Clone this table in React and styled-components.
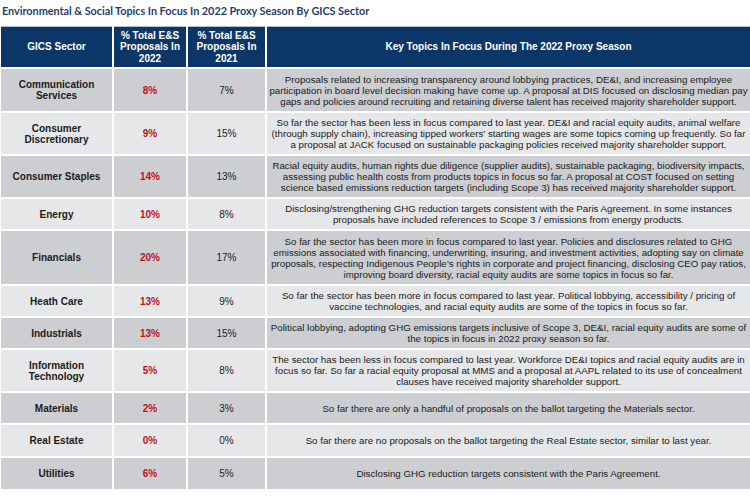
import React from "react";
import styled, { createGlobalStyle } from "styled-components";

const GlobalStyle = createGlobalStyle`
  body {
    margin: 0;
    background: #ffffff;
    font-family: "Liberation Sans", Arial, sans-serif;
  }
`;

const ROWS = [
  {
    sector: "Communication Services",
    y22: "8%",
    y21: "7%",
    h: 42,
    text: "Proposals related to increasing transparency around lobbying practices, DE&I, and increasing employee participation in board level decision making have come up. A proposal at DIS focused on disclosing median pay gaps and policies around recruiting and retaining diverse talent has received majority shareholder support.",
  },
  {
    sector: "Consumer Discretionary",
    y22: "9%",
    y21: "15%",
    h: 41,
    text: "So far the sector has been less in focus compared to last year. DE&I and racial equity audits, animal welfare (through supply chain), increasing tipped workers' starting wages are some topics coming up frequently. So far a proposal at JACK focused on sustainable packaging policies received majority shareholder support.",
  },
  {
    sector: "Consumer Staples",
    y22: "14%",
    y21: "13%",
    h: 41,
    text: "Racial equity audits, human rights due diligence (supplier audits), sustainable packaging, biodiversity impacts, assessing public health costs from products topics in focus so far. A proposal at COST focused on setting science based emissions reduction targets (including Scope 3) has received majority shareholder support.",
  },
  {
    sector: "Energy",
    y22: "10%",
    y21: "8%",
    h: 30,
    text: "Disclosing/strengthening GHG reduction targets consistent with the Paris Agreement. In some instances proposals have included references to Scope 3 / emissions from energy products.",
  },
  {
    sector: "Financials",
    y22: "20%",
    y21: "17%",
    h: 53,
    text: "So far the sector has been more in focus compared to last year. Policies and disclosures related to GHG emissions associated with financing, underwriting, insuring, and investment activities, adopting say on climate proposals, respecting Indigenous People\u2019s rights in corporate and project financing, disclosing CEO pay ratios, improving board diversity, racial equity audits are some topics in focus so far.",
  },
  {
    sector: "Heath Care",
    y22: "13%",
    y21: "9%",
    h: 30,
    text: "So far the sector has been more in focus compared to last year. Political lobbying, accessibility / pricing of vaccine technologies, and racial equity audits are some of the topics in focus so far.",
  },
  {
    sector: "Industrials",
    y22: "13%",
    y21: "15%",
    h: 30,
    text: "Political lobbying, adopting GHG emissions targets inclusive of Scope 3, DE&I, racial equity audits are some of the topics in focus in 2022 proxy season so far.",
  },
  {
    sector: "Information Technology",
    y22: "5%",
    y21: "8%",
    h: 41,
    text: "The sector has been less in focus compared to last year. Workforce DE&I topics and racial equity audits are in focus so far. So far a racial equity proposal at MMS and a proposal at AAPL related to its use of concealment clauses have received majority shareholder support.",
  },
  {
    sector: "Materials",
    y22: "2%",
    y21: "3%",
    h: 30,
    text: "So far there are only a handful of proposals on the ballot targeting the Materials sector.",
  },
  {
    sector: "Real Estate",
    y22: "0%",
    y21: "0%",
    h: 31,
    text: "So far there are no proposals on the ballot targeting the Real Estate sector, similar to last year.",
  },
  {
    sector: "Utilities",
    y22: "6%",
    y21: "5%",
    h: 31,
    text: "Disclosing GHG reduction targets consistent with the Paris Agreement.",
  },
];

const Page = styled.div`
  width: 750px;
  height: 500px;
  overflow: hidden;
`;

const Title = styled.h1`
  margin: 0;
  padding: 3px 0 0 2px;
  height: 26px;
  box-sizing: border-box;
  font-family: Lato, "Open Sans", sans-serif;
  font-size: 10.9px;
  font-weight: 700;
  line-height: 15px;
  color: #1f3f6e;
  letter-spacing: -0.05px;
`;

const Table = styled.div`
  display: flex;
  flex-direction: column;
  gap: 2px;
  margin-left: 1px;
`;

const Row = styled.div`
  display: grid;
  grid-template-columns: 111px 72px 77px 1fr;
  gap: 2px;
  height: ${(p) => p.h}px;
`;

const HeadCell = styled.div`
  display: flex;
  align-items: center;
  justify-content: center;
  text-align: center;
  background: #0b3668;
  border-top: 1px solid #b9bfc9;
  color: #ffffff;
  font-weight: 700;
  font-size: 10px;
  line-height: 11.5px;
`;

const Cell = styled.div`
  display: flex;
  align-items: center;
  justify-content: center;
  text-align: center;
  background: ${(p) => (p.dark ? "#cdced2" : "#e6e7e9")};
  color: ${(p) => (p.red ? "#c0111b" : "#1b1b1b")};
  font-size: ${(p) => (p.small ? "9.72px" : "10px")};
  font-weight: ${(p) => (p.bold ? 700 : 400)};
  line-height: 11px;
  padding: ${(p) => (p.small ? "0 2px" : "0 3px")};
`;

export default function App() {
  return (
    <Page>
      <GlobalStyle />
      <Title>
        Environmental &amp; Social Topics In Focus In 2022 Proxy Season By GICS Sector
      </Title>
      <Table>
        <Row h={41}>
          <HeadCell>GICS Sector</HeadCell>
          <HeadCell>
            % Total E&amp;S
            <br />
            Proposals In
            <br />
            2022
          </HeadCell>
          <HeadCell>
            % Total E&amp;S
            <br />
            Proposals In
            <br />
            2021
          </HeadCell>
          <HeadCell>Key Topics In Focus During The 2022 Proxy Season</HeadCell>
        </Row>
        {ROWS.map((r, i) => {
          const dark = i % 2 === 0;
          return (
            <Row key={r.sector} h={r.h}>
              <Cell dark={dark} bold>
                {r.sector}
              </Cell>
              <Cell dark={dark} bold red>
                {r.y22}
              </Cell>
              <Cell dark={dark}>{r.y21}</Cell>
              <Cell dark={dark} small>
                {r.text}
              </Cell>
            </Row>
          );
        })}
      </Table>
    </Page>
  );
}
